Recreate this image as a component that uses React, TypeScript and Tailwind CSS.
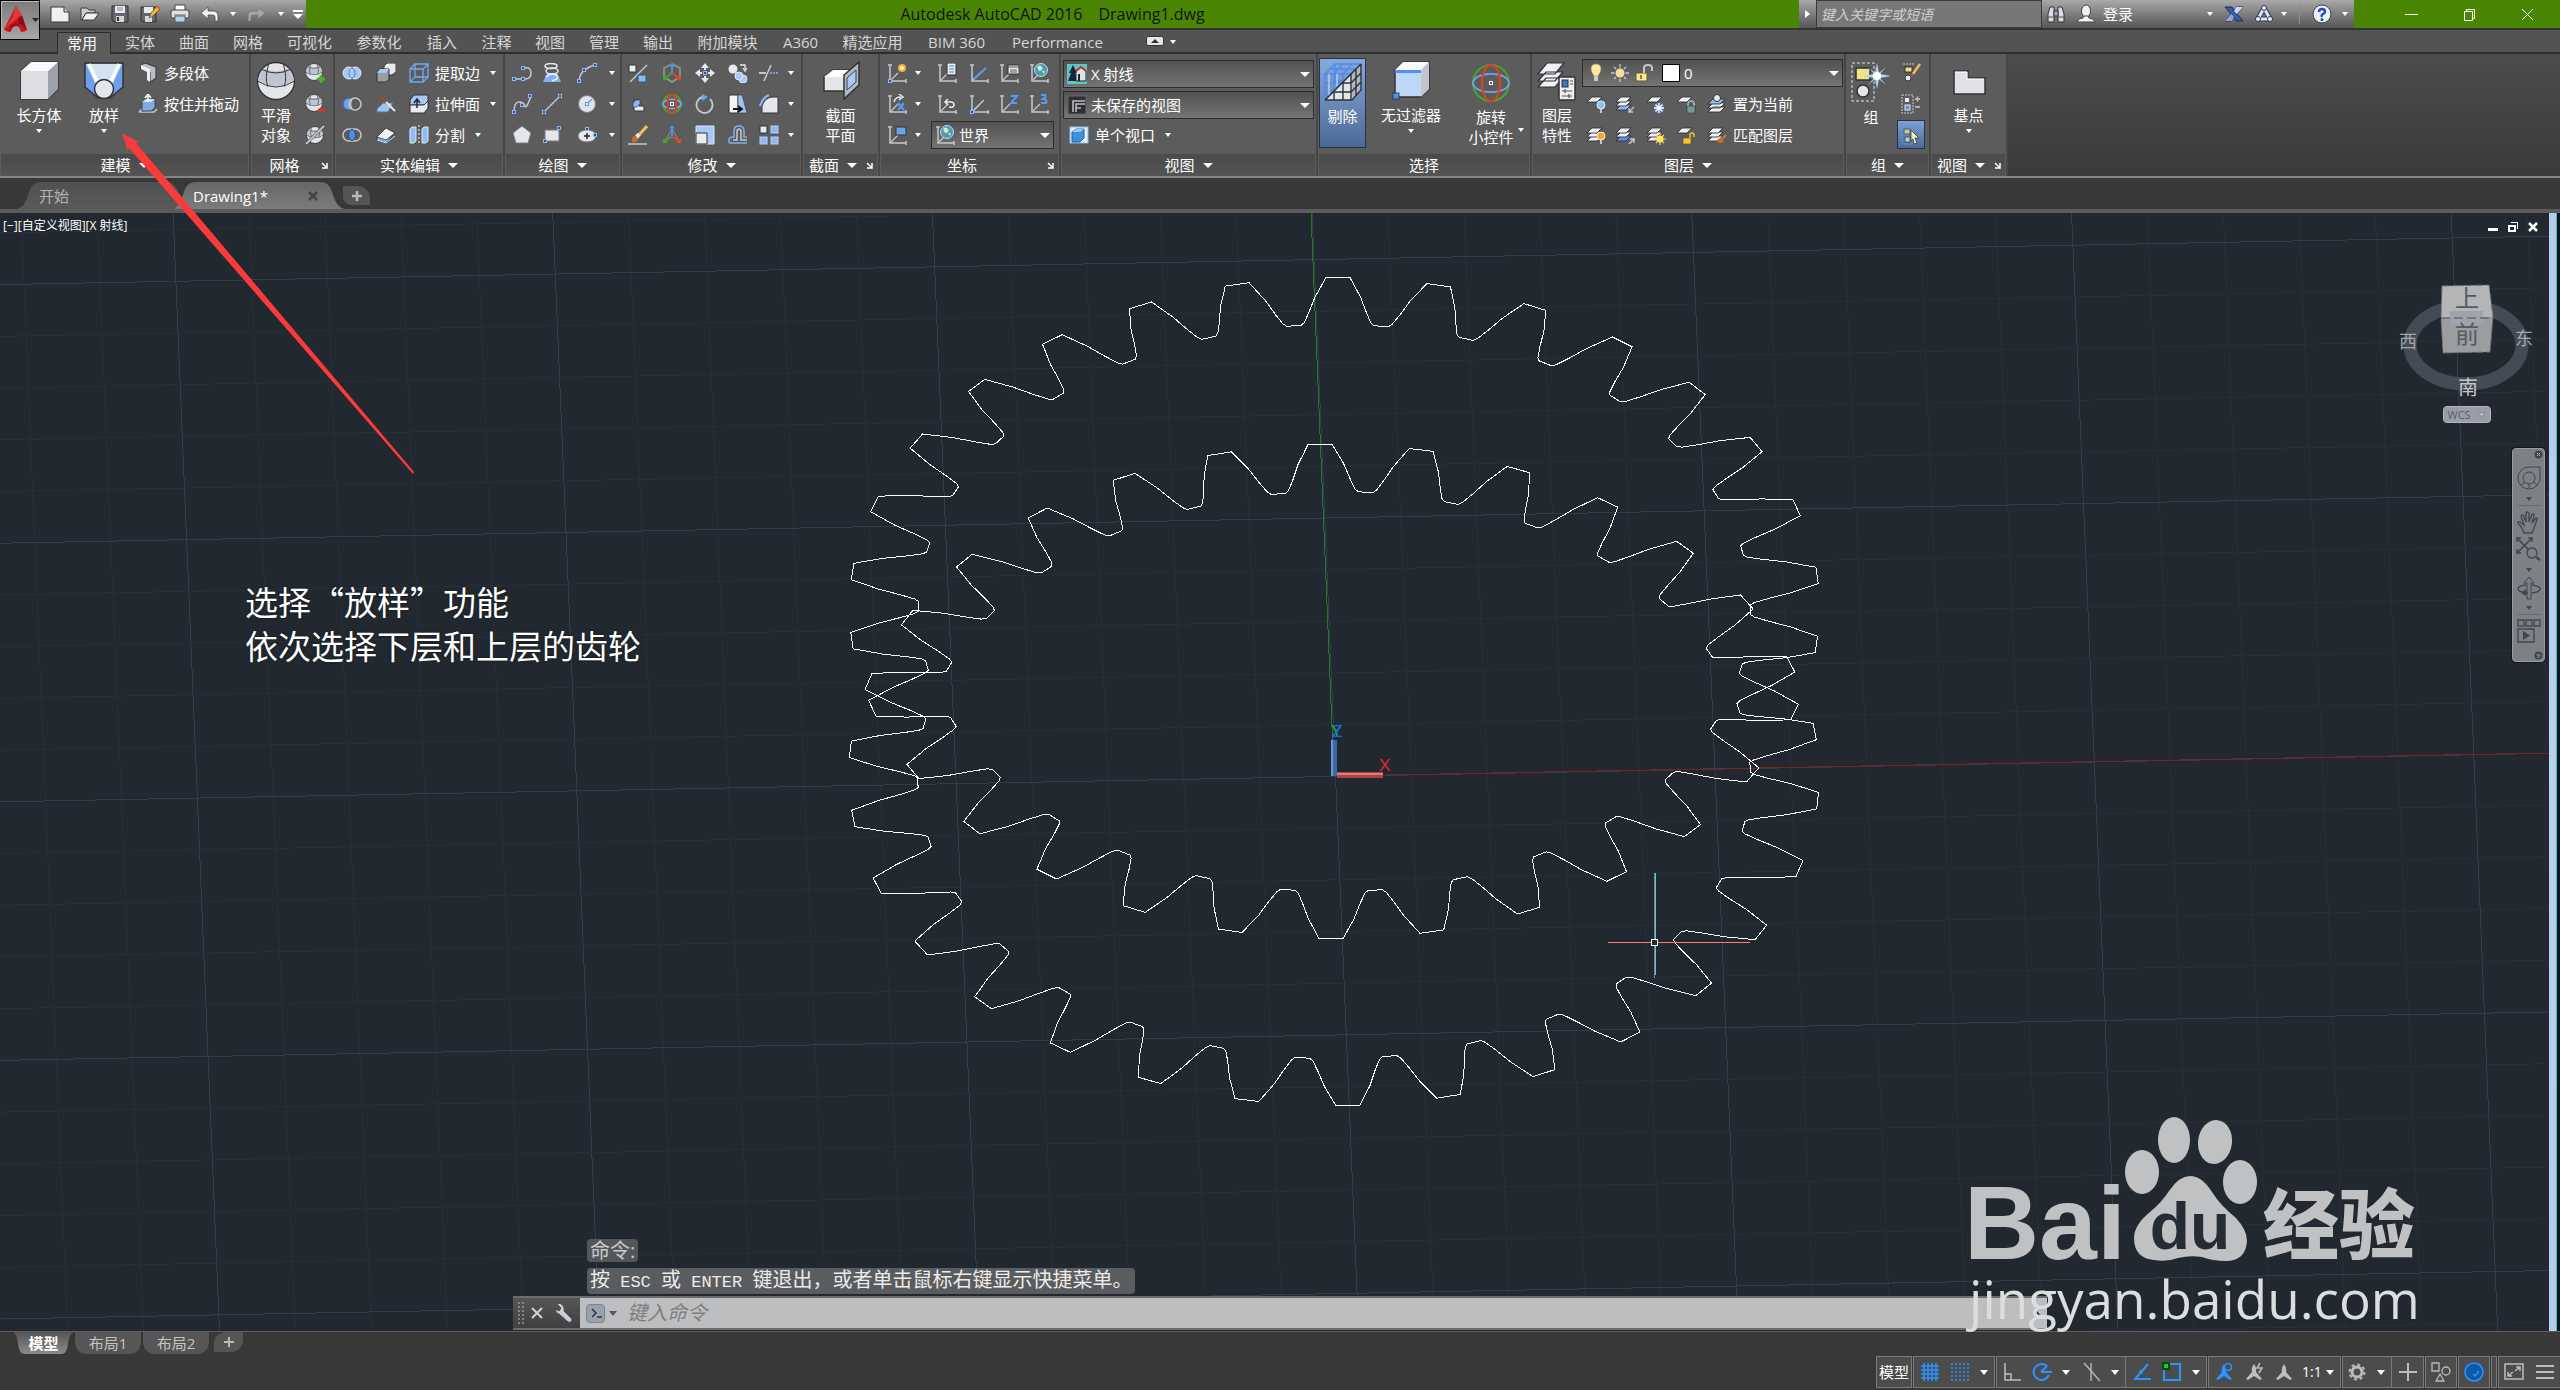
import React from "react";

type Kids = { children?: React.ReactNode };

/* ---------- generic icon helpers ---------- */

function Ic({ s = 20, children }: Kids & { s?: number }) {
  return (
    <svg width={s} height={s} viewBox={`0 0 ${s} ${s}`} fill="none" className="shrink-0" aria-hidden="true">
      {children}
    </svg>
  );
}

function Tri({ big = false }: { big?: boolean }) {
  return big ? (
    <svg width="10" height="5" viewBox="0 0 10 5" className="shrink-0" aria-hidden="true">
      <path d="M0 0H10L5 5Z" fill="#fff" />
    </svg>
  ) : (
    <svg width="6" height="4" viewBox="0 0 6 4" className="shrink-0" aria-hidden="true">
      <path d="M0 0H6L3 4Z" fill="#fff" />
    </svg>
  );
}

const W = "#e6e9ee";
const G = "#c4c8ce";
const D = "#2f3236";

/* ---------- quick access and title bar ---------- */

const NewIcon = () => (
  <Ic><path d="M1 3H14L19 8V18H1Z" fill="#eef0f2" stroke="#3a3a3a" /><path d="M14 3V8H19" fill="#c9ccd0" stroke="#3a3a3a" /></Ic>
);
const OpenIcon = () => (
  <Ic><path d="M1 4H7L9 6H15V9H6L2 16H1Z" fill="#c9ced4" stroke="#3a3a3a" /><path d="M6 9H19L14 16H2Z" fill="#eef0f3" stroke="#3a3a3a" /></Ic>
);
const SaveIcon = () => (
  <Ic><path d="M2 2H18V18H4L2 16Z" fill="#64686e" stroke="#2b2d30" /><rect x="5" y="2" width="10" height="7" fill="#e8eaec" /><rect x="6" y="12" width="8" height="6" fill="#d5d8db" /><rect x="7" y="13" width="2" height="4" fill="#333" /><path d="M7 4H13M7 6H13" stroke="#888" /></Ic>
);
const SaveAsIcon = () => (
  <Ic><path d="M1 3H16V18H3L1 16Z" fill="#64686e" stroke="#2b2d30" /><rect x="4" y="3" width="9" height="6" fill="#e8eaec" /><rect x="5" y="12" width="7" height="6" fill="#d5d8db" /><path d="M9 14L11 9L17 2L20 5L13 12Z" fill="#f0b340" stroke="#6b4a16" strokeWidth=".8" /><path d="M17 2L20 5" stroke="#c65f3d" strokeWidth="2" /></Ic>
);
const PrintIcon = () => (
  <Ic><path d="M5 1H15V7H5Z" fill="#fff" stroke="#444" /><rect x="1" y="6" width="18" height="8" rx="2" fill="#dfe2e6" stroke="#444" /><path d="M4 11H16" stroke="#666" /><path d="M5 12H15V18H5Z" fill="#b6d3ef" stroke="#55606c" /></Ic>
);
const UndoIcon = () => (
  <Ic><path d="M1 9L8 3V7H13Q18 7 18 12V17H15V13Q15 11 12 11H8V15Z" fill="#f2f2f2" stroke="#4a4a4a" strokeWidth=".8" /></Ic>
);
const RedoIcon = () => (
  <Ic><path d="M19 9L12 3V7H7Q2 7 2 12V17H5V13Q5 11 8 11H12V15Z" fill="#a6a6a6" stroke="#777" strokeWidth=".8" /></Ic>
);
const AppLogo = () => (
  <svg width="24" height="28" viewBox="0 0 24 28" aria-hidden="true">
    <path d="M12 0L23 24Q21 26 17 26L15 21Q12 19 9 21L6 26Q2 26 0 23Z" fill="#c8161d" />
    <path d="M12 0L8 12L0 23Q3 21 8 17L18 8Z" fill="#e5353a" />
    <path d="M18 9L23 24L13 15Z" fill="#8e0d12" />
    <path d="M6 18L16 17L15 21Q12 19 9 21L6 26Z" fill="#a31117" />
  </svg>
);
const Binoculars = () => (
  <Ic><path d="M4 3H8V18H2V10ZM12 3H16L18 10V18H12Z" fill="#d9dce0" stroke="#333" /><path d="M8 7H12V12H8Z" fill="#aab" stroke="#333" /><path d="M2 13H8M12 13H18" stroke="#555" /></Ic>
);
const UserIcon = () => (
  <Ic><ellipse cx="10" cy="7" rx="4.5" ry="6" fill="#f1f2f4" stroke="#444" /><path d="M1 18Q2 14 7 14L8 12H12L13 14Q18 14 19 18Z" fill="#f1f2f4" stroke="#444" /></Ic>
);
const ExchangeIcon = () => (
  <Ic><path d="M1 3H8L10 7L12 3H19L13 10L19 17H12L10 13L8 17H1L7 10Z" fill="#3b5ca8" stroke="#1c2a50" /><path d="M12 3H19L13 10L10 7Z" fill="#c9d6ee" /><path d="M1 17L7 10L10 13L8 17Z" fill="#8fa8dc" /></Ic>
);
const A360Icon = () => (
  <Ic><path d="M10 4L4 15H16Z" stroke="#2b3657" strokeWidth="5" strokeLinejoin="round" /><path d="M10 4L4 15H16Z" stroke="#dfe4ee" strokeWidth="3" strokeLinejoin="round" /><circle cx="10" cy="4" r="2.500" fill="#eef1f7" stroke="#2b3657" /><circle cx="4" cy="15" r="2.500" fill="#eef1f7" stroke="#2b3657" /><circle cx="16" cy="15" r="2.500" fill="#eef1f7" stroke="#2b3657" /></Ic>
);
const HelpIcon = () => (
  <Ic><circle cx="10" cy="10" r="9" fill="#eceef1" stroke="#444" /><path d="M7 8Q7 5 10 5T13 8Q13 9 11 10T10 13" stroke="#1d4fb4" strokeWidth="2.4" /><circle cx="10" cy="15.500" r="1.500" fill="#1d4fb4" /></Ic>
);

/* ---------- ribbon: modeling ---------- */

const BoxBig = () => (
  <Ic s={40}><path d="M2 10L12 1H39V28L29 38H2Z" fill="#e9eaec" stroke={D} strokeWidth="1.500" /><path d="M2 10H29V38H2Z" fill="#dcdee1" /><path d="M29 10L39 1V28L29 38Z" fill="#9da1ab" /><path d="M2 10L12 1H39L29 10Z" fill="#fafafa" /></Ic>
);
const LoftBig = () => (
  <Ic s={40}><path d="M1 2H39V26L26 37H14L1 26Z" fill="#6ea0e8" stroke={D} strokeWidth="1.500" /><path d="M2 3H38L29 22H11Z" fill="#d3e2f5" /><path d="M5 3L14 22M35 3L26 22" stroke="#fff" strokeWidth="3" /><circle cx="20" cy="28" r="9.500" fill="#e4e6e9" stroke={D} strokeWidth="1.500" /></Ic>
);
const Polysolid = () => (
  <Ic><path d="M3 2L7 0L18 4V15L12 19V9L3 6Z" fill="#b9bcc2" stroke={D} /><path d="M3 2L12 6V19L9 17V9L3 6Z" fill="#eceef0" /></Ic>
);
const PressPull = () => (
  <Ic><path d="M1 18L4 15M1 18H16L19 15" stroke={G} strokeWidth="1.500" /><path d="M4 8L8 5H17V14L13 17H4Z" fill="#7cabea" stroke={D} strokeWidth=".8" /><path d="M4 8L8 5H17L13 8Z" fill="#cfe1f7" /><path d="M10 8V2M7 4L10 0L13 4" stroke="#fff" strokeWidth="1.500" /></Ic>
);

/* ---------- ribbon: mesh ---------- */

function SphereShape({ c, r }: { c: number; r: number }) {
  const small = r < 12;
  return (
    <g>
      <circle cx={c} cy={c} r={r} fill="#e3e5e8" stroke={D} strokeWidth={small ? 0.8 : 1.3} />
      <path d={`M${c - r} ${c - r * 0.1}Q${c} ${c + r * 0.6} ${c + r} ${c - r * 0.1}L${c + r * 0.7} ${c - r * 0.7}Q${c} ${c - r * 0.35} ${c - r * 0.7} ${c - r * 0.7}Z`} fill="#aeb8c4" opacity=".7" />
      <path d={`M${c - r} ${c}Q${c} ${c + r * 0.65} ${c + r} ${c}M${c - r * 0.75} ${c - r * 0.62}Q${c} ${c - r * 0.25} ${c + r * 0.75} ${c - r * 0.62}M${c - r * 0.4} ${c - r * 0.9}Q${c - r * 0.62} ${c - r * 0.2} ${c - r * 0.45} ${c + r * 0.3}M${c + r * 0.4} ${c - r * 0.9}Q${c + r * 0.62} ${c - r * 0.2} ${c + r * 0.45} ${c + r * 0.3}`} stroke={small ? "#5a5f66" : D} strokeWidth={small ? 0.8 : 1} />
    </g>
  );
}
const SphereBig = () => <Ic s={40}><SphereShape c={20} r={18.5} /></Ic>;
const MeshMore = () => <Ic><SphereShape c={9} r={8.5} /><path d="M16 12V20M12 16H20" stroke="#4fae24" strokeWidth="3" /></Ic>;
const MeshLess = () => <Ic><SphereShape c={9} r={8.5} /><path d="M13 16H20" stroke="#e3341c" strokeWidth="3" /></Ic>;
const MeshRefine = () => <Ic><SphereShape c={10} r={8.5} /><path d="M1 19L19 1" stroke="#5c5c5c" strokeWidth="3" /><path d="M1 19L19 1" stroke="#d8dadd" strokeWidth="1.500" /></Ic>;

/* ---------- ribbon: solid editing ---------- */

const Union = () => <Ic><circle cx="7" cy="10" r="6" fill="#a9c8f3" stroke="#e3edfb" /><circle cx="13" cy="10" r="6" fill="#a9c8f3" stroke="#e3edfb" /><ellipse cx="10" cy="10" rx="3" ry="5" stroke="#4a79bd" /></Ic>;
const Subtract = () => <Ic><circle cx="7" cy="10" r="6" fill="#6ea0e4" stroke="#3565a9" /><circle cx="13" cy="10" r="6" fill="#5c5c5c" stroke={G} strokeWidth="1.500" /><path d="M10 5Q7 10 10 15" stroke={G} strokeWidth="1.500" /></Ic>;
const Intersect = () => <Ic><rect x="1" y="4" width="18" height="12" rx="6" stroke={G} strokeWidth="1.500" /><ellipse cx="10" cy="10" rx="3.500" ry="5.500" fill="#4f8be0" stroke="#2d4e82" /></Ic>;
const BoxPair = () => <Ic><path d="M8 3L11 0H20V9L16 12H8Z" fill="#e8eaed" stroke={D} /><path d="M1 10L4 6H13V16L10 19H1Z" fill="#9b9da1" stroke={D} /><path d="M1 10L4 6H13L10 10Z" fill="#a9c8f3" /></Ic>;
const SliceIcon = () => <Ic><path d="M1 15L7 9H17L12 18H1Z" fill="#9cc1f4" stroke="#54749f" /><path d="M3 1L12 10" stroke="#8a5420" strokeWidth="2.500" /><path d="M10 8L19 17" stroke="#e8eaed" strokeWidth="2" /></Ic>;
const ThickIcon = () => <Ic><path d="M1 12L10 3L19 8L10 18L1 15Z" fill="#8eb7f0" stroke={D} /><path d="M1 12L10 3L19 8L10 15Z" fill="#eff1f3" stroke={D} strokeWidth=".8" /><path d="M1 15L10 18L19 11" stroke="#cfe0f7" /></Ic>;
const ExtractEdges = () => <Ic><path d="M1 6H14V19H1ZM6 1H19V14H6ZM1 6L6 1M14 6L19 1M14 19L19 14M1 19L6 14" stroke="#74a7f3" strokeWidth="1.300" /></Ic>;
const ExtrudeFaces = () => <Ic><path d="M1 6L5 1H19V7L15 11H1Z" fill="#a8c8f4" stroke={D} /><path d="M1 11H15L19 7V14L15 19H1Z" fill="#e8eaed" stroke={D} /><path d="M8 14V6M5 9L8 5L11 9" stroke="#1b2a40" strokeWidth="1.500" /></Ic>;
const SeparateIcon = () => <Ic><path d="M1 4L3 2H7V16L5 18H1ZM13 4L15 2H19V16L17 18H13Z" fill="#93bbf3" stroke="#dfe9f8" strokeWidth="1" /><path d="M10 0V20" stroke="#fff" strokeDasharray="2 2" /></Ic>;

/* ---------- ribbon: draw ---------- */

const Node = ({ x, y }: { x: number; y: number }) => <rect x={x - 1.5} y={y - 1.5} width="3" height="3" fill="#32507e" stroke="#8bb8fa" />;
const PolylineIcon = () => <Ic><path d="M2 16H13Q19 16 19 10T13 5H11" stroke={G} strokeWidth="1.500" /><Node x={2} y={16} /><Node x={11} y={16} /><Node x={11} y={5} /></Ic>;
const HelixIcon = () => <Ic><path d="M5 10H15L19 19H1Z" fill="#7fb0f2" /><ellipse cx="9" cy="3" rx="6" ry="2.500" stroke={W} strokeWidth="1.500" /><ellipse cx="10" cy="8" rx="6" ry="3" stroke={W} strokeWidth="1.500" /><path d="M4 14Q9 9 14 12T10 18" stroke={W} strokeWidth="1.500" /></Ic>;
const ArcIcon = () => <Ic><path d="M2 18Q3 6 18 2" stroke={G} strokeWidth="1.500" /><Node x={2} y={18} /><Node x={18} y={2} /><Node x={7} y={7} /></Ic>;
const SplineIcon = () => <Ic><path d="M2 18Q2 8 7 8T13 12T19 2" stroke={G} strokeWidth="1.500" /><Node x={2} y={18} /><Node x={10} y={11} /><Node x={18} y={2} /></Ic>;
const LineIcon = () => <Ic><path d="M2 18L18 2" stroke={G} strokeWidth="1.500" /><Node x={2} y={18} /><Node x={18} y={2} /></Ic>;
const CircleIcon = () => <Ic><circle cx="10" cy="10" r="8.500" fill="#e1e4e9" stroke="#777d87" /><path d="M10 10L15 5" stroke="#5a96ec" strokeWidth="1.500" /><rect x="8.500" y="8.500" width="3" height="3" fill="#dceafc" stroke="#5a96ec" /></Ic>;
const PolygonIcon = () => <Ic><path d="M10 1L19 8L16 18H4L1 8Z" fill="#e4e6ea" stroke="#777d87" /></Ic>;
const RectIcon = () => <Ic><rect x="3" y="5" width="14" height="11" fill="#e4e6ea" stroke="#777d87" /><Node x={3} y={16} /><Node x={17} y={3} /></Ic>;
const EllipseIcon = () => <Ic><ellipse cx="10" cy="11" rx="9" ry="6" fill="#e4e6ea" stroke="#777d87" /><path d="M10 8V14M7 11H13" stroke="#222" strokeWidth="1.500" /><Node x={10} y={4} /><Node x={18} y={10} /></Ic>;

/* ---------- ribbon: modify ---------- */

const AlignIcon = () => <Ic><path d="M1 2H8V9H1Z" fill="#eceef1" stroke={D} /><path d="M2 19L19 2" stroke={G} strokeWidth="1.500" /><path d="M10 12H18V19H10Z" fill="#8bb7f5" stroke="#35557f" /></Ic>;
const Gizmo3DMove = () => <Ic><path d="M10 1L18 5V14L10 19L2 14V5Z" stroke="#98999b" strokeWidth="1.500" /><path d="M10 10V3" stroke="#4d8af0" strokeWidth="2" /><path d="M10 10L3 15" stroke="#47a52e" strokeWidth="2" /><path d="M10 10L17 15" stroke="#de4a2b" strokeWidth="2" /><rect x="1" y="13" width="4" height="4" fill="#47a52e" /><rect x="15" y="13" width="4" height="4" fill="#de4a2b" /><rect x="8" y="1" width="4" height="3" fill="#4d8af0" /></Ic>;
const MoveIcon = () => <Ic><path d="M10 0L14 5H11V7H9V5H6ZM10 20L14 15H11V13H9V15H6ZM0 10L5 6V9H7V11H5V14ZM20 10L15 6V9H13V11H15V14Z" fill={W} /><Node x={10} y={10} /></Ic>;
const CopyIcon = () => <Ic><circle cx="5" cy="6" r="4.500" fill={W} /><circle cx="15" cy="16" r="4" fill="#a8caf8" stroke="#dceafb" /><circle cx="11" cy="13" r="4" fill="#a8caf8" stroke="#dceafb" /><path d="M12 2H17V6M15 5L17 8L19 5" stroke={W} strokeWidth="1.300" /></Ic>;
const TrimIcon = () => <Ic><path d="M0 10H7" stroke={W} strokeWidth="1.500" /><path d="M5 18L12 2" stroke={G} strokeWidth="1.500" /><path d="M11 10H20" stroke="#7fb0f2" strokeWidth="1.500" strokeDasharray="2 1" /></Ic>;
const EraseSolid = () => <Ic><path d="M6 6H11V12H16V17H6Z" fill={W} stroke={D} /><path d="M5 9L8 6H12V10L9 13H5Z" fill="#8bb7f5" stroke={D} strokeWidth=".6" /></Ic>;
const GizmoRotate = ({ s = 20 }: { s?: number }) => (
  <Ic s={s}>
    <circle cx={s / 2} cy={s / 2} r={s * 0.45} stroke="#47a52e" strokeWidth="2" />
    <ellipse cx={s / 2} cy={s / 2} rx={s * 0.45} ry={s * 0.23} stroke="#6ea4f2" strokeWidth="1.800" />
    <ellipse cx={s / 2} cy={s / 2} rx={s * 0.23} ry={s * 0.45} stroke="#e0401f" strokeWidth="2" />
    <rect x={s / 2 - 1.5} y={s / 2 - 1.5} width="3" height="3" fill="#555" stroke="#fff" />
  </Ic>
);
const RotateIcon = () => <Ic><path d="M8 3A8 8 0 1 0 15 5" stroke={G} strokeWidth="1.800" /><path d="M7 0L13 3L7 7Z" fill="#6ea4f2" /></Ic>;
const TaperIcon = () => <Ic><path d="M1 1H10V19H1Z" fill="#f2f3f5" stroke={D} /><path d="M10 1H14L19 19H10Z" fill="#9cc2f6" stroke={D} strokeWidth=".6" /><path d="M5 15H13M10 12L14 15L10 18" stroke="#111" strokeWidth="1.800" /></Ic>;
const FilletIcon = () => <Ic><path d="M3 19V12Q6 3 14 3H19V19Z" fill="#e4e6ea" stroke={D} /><path d="M1 12Q4 3 10 1" stroke="#7fb0f2" strokeWidth="2.500" /></Ic>;
const BrushIcon = () => <Ic><path d="M19 1L10 11" stroke="#f0bd58" strokeWidth="3" /><path d="M11 9L8 13" stroke={W} strokeWidth="4" /><path d="M4 17Q3 11 8 11L10 14Q9 18 4 17Z" fill="#d9632a" /><path d="M0 19H19" stroke={G} strokeWidth="1.500" /></Ic>;
const GizmoScale = () => <Ic><path d="M10 4L3 16L10 12L17 16Z" stroke="#8d9095" strokeWidth="1" /><path d="M10 11V3" stroke="#4d8af0" strokeWidth="2" /><path d="M9 12L2 17" stroke="#47a52e" strokeWidth="2" /><path d="M11 12L18 17" stroke="#de4a2b" strokeWidth="2" /><rect x="8" y="1" width="4" height="3" fill="#4d8af0" /><rect x="1" y="14" width="4" height="4" fill="#47a52e" /><rect x="15" y="14" width="4" height="4" fill="#de4a2b" /></Ic>;
const ScaleIcon = () => <Ic><path d="M1 1H19V19H1Z" fill="#a8c9f6" stroke="#dce6f5" /><path d="M1 8H12V19H1Z" fill="#e9ebee" stroke={D} /></Ic>;
const OffsetIcon = () => <Ic><path d="M1 18V15Q1 12 5 12H6V6Q6 1 11 1T16 6V12H19" stroke="#7fb0f2" strokeWidth="1.500" /><path d="M1 18H19" stroke="#7fb0f2" strokeWidth="1.500" /><path d="M5 15H9V7Q9 4 11 4T13 7V15H19" stroke={G} strokeWidth="1.500" /></Ic>;
const ArrayIcon = () => <Ic><rect x="1" y="1" width="7" height="7" fill={W} stroke={D} /><rect x="12" y="1" width="7" height="7" fill="#8bb7f5" stroke="#b7d2f8" /><rect x="1" y="12" width="7" height="7" fill="#8bb7f5" stroke="#b7d2f8" /><rect x="12" y="12" width="7" height="7" fill="#8bb7f5" stroke="#b7d2f8" /></Ic>;

const SectionBig = () => <Ic s={40}><path d="M3 16L12 9H31L26 30H3Z" fill="#e3e5e8" stroke={D} strokeWidth="1.500" /><path d="M3 16L12 9H31L24 16Z" fill="#fff" /><path d="M23 14L38 1V24L23 38Z" fill="#b4b7bc" stroke={D} strokeWidth="1.500" /><path d="M26 17L35 9V21L26 29Z" fill="#a8caf8" stroke="#33445c" /></Ic>;

/* ---------- ribbon: coordinates ---------- */

function Axes({ children }: Kids) {
  return (
    <Ic>
      <path d="M3 2V18H19" stroke={G} strokeWidth="1.500" />
      <path d="M4 17L11 10" stroke={G} strokeWidth="1.200" />
      <path d="M1 2H5M19 16V20" stroke={G} strokeWidth="1.500" />
      {children}
    </Ic>
  );
}
const UcsNew = () => <Axes><circle cx="15" cy="5" r="4" fill="#f7b13b" /><circle cx="15" cy="5" r="2" fill="#fff4c9" /><Node x={3} y={18} /></Axes>;
const UcsX = () => <Axes><path d="M7 8Q8 3 14 3M12 0L16 3L12 6" stroke={W} strokeWidth="1.500" /><path d="M11 9L17 16M17 9L11 16" stroke="#5a9af5" strokeWidth="2" /></Axes>;
const UcsView = () => <Axes><rect x="9" y="2" width="10" height="8" fill="#6ba2ef" stroke={D} /></Axes>;
const UcsPanel = () => <Axes><rect x="10" y="0" width="9" height="12" fill="#e9ebee" stroke={D} /><path d="M12 3H17M12 6H17M12 9H17" stroke="#4f83cc" /></Axes>;
const UcsZAxis = () => <Axes><path d="M5 16L17 5" stroke="#5a9af5" strokeWidth="1.800" /></Axes>;
const UcsNamed = () => <Axes><rect x="9" y="2" width="11" height="9" fill="#e9ebee" stroke={D} /><path d="M9 4H20M11 7H18M11 9H18" stroke="#555" /></Axes>;
const Globe = ({ x = 12, y = 7 }: { x?: number; y?: number }) => <g><circle cx={x} cy={y} r="6.500" fill="#4f9bb0" stroke="#bcdde6" /><path d={`M${x - 4} ${y - 3}Q${x - 1} ${y - 6} ${x + 1} ${y - 3}T${x - 2} ${y + 1}ZM${x + 1} ${y + 1}Q${x + 5} ${y} ${x + 3} ${y + 4}Z`} fill="#d3ead0" /></g>;
const UcsWorld = () => <Axes><Globe /></Axes>;
const UcsPrev = () => <Axes><path d="M8 8H14Q17 8 17 11T12 13M11 5L8 8L11 11" stroke={W} strokeWidth="1.500" /></Axes>;
const UcsOrigin = () => <Axes><path d="M5 16L15 6" stroke={G} strokeWidth="1.200" /><Node x={3} y={18} /></Axes>;
const UcsZ = () => <Axes><path d="M12 2H18L12 9H18" stroke="#5a9af5" strokeWidth="2" /></Axes>;
const Ucs3 = () => <Axes><path d="M12 1H16Q18 3 14 5Q19 6 17 9H12" stroke="#5a9af5" strokeWidth="2" /></Axes>;

/* ---------- ribbon: view and selection ---------- */

const XrayIcon = () => <Ic><rect width="20" height="20" fill="#5fc6c2" /><path d="M6 1L10 9H8L11 17H1L4 9H2Z" fill="#14253f" /><path d="M9 7L14 3L19 7V17H9Z" fill="#dfe3e7" stroke="#222" /><path d="M9 7L14 3L19 7" stroke="#b92d28" strokeWidth="2" /><path d="M12 10V17" stroke="#222" strokeWidth="2" /></Ic>;
const ViewIcon = () => <Ic><rect x="1" y="1" width="18" height="18" fill="#2e2f31" stroke="#686a6d" /><path d="M6 17V6H18M9 17V9H18M9 13H14" stroke="#b9bcc0" strokeWidth="1.600" /></Ic>;
const ViewportIcon = () => <Ic><rect x="1" y="2" width="18" height="16" fill="#e9f1fb" stroke="#8fb7e8" /><path d="M3 7L7 4H15V13L11 17H3Z" fill="#3f8fe0" stroke="#1f5fa8" /><path d="M3 7L7 4H15L11 7Z" fill="#9ccaf7" /></Ic>;
const CullBig = () => (
  <Ic s={40}>
    <path d="M2 38L28 12L38 2V28L29 38Z" fill="#e3e5e8" />
    <path d="M28 12L38 2V28L29 38Z" fill="#b4b8c0" />
    <path d="M2 12H28L2 38ZM12 2H38L28 12H2ZM11 12V29M20 12V20M2 21H19M2 30H10M12 2V20M20 2L11 12M29 2L20 12M12 19H21M7 7H33" stroke="#4c8bf0" strokeWidth="1.400" />
    <path d="M14 12V24M6 12V34" stroke="#dce9fb" strokeWidth="1" />
    <path d="M2 38H29L38 28V2M11 29V38M20 21V38M28 12V38M11 30H28L38 20M20 21H28L38 11M33 7V33M2 38L38 2" stroke={D} strokeWidth="1.400" />
  </Ic>
);
const FilterBig = () => <Ic s={40}><path d="M4 9L12 1H38V28L30 36H4Z" fill="#bdd8f6" stroke={D} strokeWidth="1.500" /><path d="M4 9L12 1H38L30 9Z" fill="#fafafa" /><path d="M30 9L38 1V28L30 36Z" fill="#c2c5cb" /><path d="M4 9H30V12H4Z" fill="#4f90f2" /><rect x="2" y="32" width="6" height="6" fill="#4f90f2" stroke={D} strokeWidth=".8" /></Ic>;

/* ---------- ribbon: layers ---------- */

function Sheets({ tint = "#f1f2f4", n = 3 }: { tint?: string; n?: number }) {
  return (
    <g stroke={D} strokeWidth=".9">
      {n > 2 && <path d="M1 16L6 11H16L11 16Z" fill={tint} />}
      {n > 1 && <path d="M1 12L6 7H16L11 12Z" fill="#f1f2f4" />}
      <path d="M1 8L6 3H16L11 8Z" fill="#f1f2f4" />
    </g>
  );
}
const LayerPropsBig = () => (
  <Ic s={40}><g stroke={D} strokeWidth="1.200" fill="#f1f2f4"><path d="M1 26L9 17H26L18 26ZM1 20L9 11H26L18 20ZM1 13L10 2H27L18 13Z" /></g><rect x="22" y="16" width="16" height="23" rx="1" fill="#eceef1" stroke={D} strokeWidth="1.500" /><rect x="25" y="19" width="6" height="7" fill="#3f74c0" stroke="#234" /><path d="M33 20H36M33 23H36M25 30H35M25 35H35M28 28V32M32 33V37" stroke="#555" strokeWidth="1.200" /></Ic>
);
const LayerOff = () => <Ic><Sheets n={1} /><circle cx="15" cy="11" r="4" fill="#8fc1f7" stroke="#e1effd" /><path d="M15 15V19" stroke={G} strokeWidth="2" /></Ic>;
const LayerIso = () => <Ic><Sheets tint="#8fbdf4" /><path d="M19 13L14 18M14 14V18H18" stroke={G} strokeWidth="1.300" /></Ic>;
const LayerFreeze = () => <Ic><Sheets n={1} /><circle cx="13" cy="14" r="5.500" fill="#4776b6" /><path d="M13 9V19M8 14H18M9.500 10.500L16.500 17.500M16.500 10.500L9.500 17.500" stroke="#fff" strokeWidth="1.300" /></Ic>;
const LayerLock = () => <Ic><Sheets n={1} /><rect x="11" y="12" width="8" height="7" fill="#6f9c9a" stroke={D} strokeWidth=".6" /><path d="M12 12V10Q12 7 15 7T18 10V12" stroke="#9dbab8" strokeWidth="1.500" /></Ic>;
const LayerCurrent = () => <Ic><g stroke={D} strokeWidth=".9"><path d="M1 18L6 13H18L13 18ZM1 14L6 9H18L13 14Z" fill="#f1f2f4" /><path d="M1 10L6 5H18L13 10Z" fill="#8fbdf4" /></g><circle cx="10" cy="4" r="3.500" fill={W} stroke={D} /></Ic>;
const LayerOn = () => <Ic><Sheets /><circle cx="15" cy="11" r="4" fill="#f4a63a" stroke="#fff1cd" /><path d="M15 15V19" stroke={G} strokeWidth="2" /></Ic>;
const LayerUniso = () => <Ic><Sheets tint="#5a94ea" /><path d="M14 19L19 14M15 14H19V18" stroke={G} strokeWidth="1.500" /></Ic>;
const LayerThaw = () => <Ic><Sheets /><path d="M14 8V20M8 14H20M10 10L18 18M18 10L10 18" stroke="#f7d24a" strokeWidth="1.200" /><circle cx="14" cy="14" r="3.500" fill="#ffe45c" /></Ic>;
const LayerUnlock = () => <Ic><Sheets n={1} /><rect x="7" y="13" width="8" height="6" fill="#f3c33c" stroke="#5b4510" strokeWidth=".6" /><path d="M14 13V10Q14 8 16 8T18 10V12" stroke="#f3c33c" strokeWidth="1.500" /></Ic>;
const LayerMatch = () => <Ic><Sheets /><path d="M9 16L14 12L17 16Q14 20 9 16Z" fill="#d9632a" /><path d="M15 14L19 10" stroke="#b98045" strokeWidth="2" /></Ic>;
const BulbIcon = () => <Ic><path d="M10 1Q15 1 15 6Q15 9 12 13H8Q5 9 5 6Q5 1 10 1Z" fill="#fde9a4" stroke="#b08d3c" strokeWidth=".6" /><rect x="8" y="13" width="4" height="5" fill="#c9ccd0" /></Ic>;
const SunIcon = () => <Ic><path d="M10 1V19M1 10H19M4 4L16 16M16 4L4 16" stroke={G} strokeWidth="1.300" /><circle cx="10" cy="10" r="5.500" fill="#5d5d5d" /><circle cx="10" cy="10" r="4.500" fill="#fbdc9c" /></Ic>;
const OpenLock = () => <Ic><rect x="2" y="10" width="11" height="8" fill="#fae59c" stroke="#6d5a22" /><path d="M10 10V5Q10 2 14 2T18 5V8" stroke={G} strokeWidth="2" /><path d="M7 12V16" stroke="#6d5a22" strokeWidth="1.500" /></Ic>;

/* ---------- ribbon: groups and base view ---------- */

const Burst = ({ x, y }: { x: number; y: number }) => (
  <g transform={`translate(${x} ${y})`}><path d="M0 -13L2 -3L9 -9L3 -2L14 0L3 2L9 9L2 3L0 13L-2 3L-9 9L-3 2L-14 0L-3 -2L-9 -9L-2 -3Z" fill="#a9d4fa" /><circle r="4" fill="#fff" /></g>
);
const GroupBig = () => <Ic s={42}><rect x="2" y="2" width="22" height="38" stroke="#dfe1e4" strokeDasharray="3 2" /><rect x="6" y="7" width="14" height="12" fill="#efe389" stroke={D} strokeWidth="1.500" /><circle cx="13" cy="30" r="6" fill="#e4e6ea" stroke={D} strokeWidth="1.500" /><Burst x={27} y={15} /></Ic>;
const GroupEdit = () => <Ic><path d="M2 1H13" stroke={G} strokeDasharray="2 1" /><rect x="4" y="4" width="7" height="5" fill="#efe389" stroke={D} /><circle cx="7" cy="15" r="3" fill={W} stroke={D} /><path d="M19 1L12 11" stroke="#f0bd58" strokeWidth="2.500" /><path d="M12 11L10 14" stroke="#d3423a" strokeWidth="2" /></Ic>;
const GroupAdd = () => <Ic><rect x="1" y="1" width="11" height="18" stroke={G} strokeDasharray="2 1" /><rect x="4" y="4" width="4" height="4" fill={W} /><rect x="4" y="11" width="5" height="5" fill="#5d93e0" stroke="#dceafb" /><path d="M14 5H19M16.500 2.500V7.500M14 13H19" stroke={G} strokeWidth="1.300" /></Ic>;
const GroupSelect = () => <Ic><rect x="1" y="1" width="11" height="18" stroke="#5f9cf6" strokeDasharray="2 1" /><rect x="3" y="4" width="6" height="5" fill="#cdc891" stroke="#4a5a6a" /><rect x="4" y="12" width="5" height="5" fill="#c3cad4" stroke="#4a5a6a" /><path d="M10 5L18 13H14L16 18L13 19L12 14L10 16Z" fill="#f0ecb4" stroke="#2f3a50" strokeWidth=".8" /></Ic>;
const BaseBig = () => <Ic s={40}><path d="M5 10H19V17H36V33H5Z" fill="#dfe1e5" stroke={D} strokeWidth="1.500" /><path d="M6 11H18V18H35" stroke="#fff" /></Ic>;

/* ---------- ribbon building blocks ---------- */

function Panel({ title, w, more, launcher, children }: Kids & { title: string; w: string; more?: boolean; launcher?: boolean }) {
  return (
    <section aria-label={title} className={`flex shrink-0 flex-col border-r-2 border-[#474747] bg-[#5c5c5c] ${w}`}>
      <div className="flex h-[100px] pt-[3px]">{children}</div>
      <footer className="mx-px flex h-[22px] items-center justify-center bg-gradient-to-b from-[#4a4a4a] to-[#545454]">
        <button className="flex flex-1 items-center justify-center gap-2">
          {title}
          {more && <Tri big />}
        </button>
        {launcher && (
          <button aria-label={`${title} 设置`} className="px-1">
            <svg width="7" height="7" viewBox="0 0 7 7" fill="none" stroke="#fff" strokeWidth="1.500">
              <path d="M1 1L6 6M6 1V6H1" />
            </svg>
          </button>
        )}
      </footer>
    </section>
  );
}

function Big({ icon, lines, w, arrow, active }: { icon: React.ReactNode; lines: string[]; w: string; arrow?: boolean; active?: boolean }) {
  return (
    <button
      className={`flex shrink-0 flex-col items-center border pt-[3px] leading-5 ${w} ${
        active ? "mt-px h-[90px] border-[#27324c] bg-gradient-to-b from-[#86a9dc] to-[#4d6a94]" : "h-[94px] border-transparent"
      }`}
    >
      {icon}
      <span className="mt-1 flex flex-col items-center">
        {lines.map((l) => (
          <span key={l}>{l}</span>
        ))}
      </span>
      {arrow && (
        <span className="mt-1">
          <Tri />
        </span>
      )}
    </button>
  );
}

function Tool({ name, children, active }: Kids & { name: string; active?: boolean }) {
  return (
    <button
      aria-label={name}
      className={`flex items-center justify-center ${active ? "mx-px my-[1px] border border-[#27324c] bg-gradient-to-b from-[#7ea0d4] to-[#4d6a94]" : ""}`}
    >
      {children}
    </button>
  );
}

function Drop({ name }: { name: string }) {
  return (
    <button aria-label={name} className="flex items-center justify-center">
      <Tri />
    </button>
  );
}

function Labeled({ icon, text, arrow }: { icon: React.ReactNode; text: string; arrow?: boolean }) {
  return (
    <button className="flex items-center gap-[6px] whitespace-nowrap px-[6px]">
      {icon}
      <span>{text}</span>
      {arrow && (
        <span className="ml-1">
          <Tri />
        </span>
      )}
    </button>
  );
}

function Combo({ label, value, icon, className = "" }: { label: string; value: string; icon: React.ReactNode; className?: string }) {
  return (
    <label className={`flex h-7 items-center gap-1 border border-[#2c2c2c] bg-gradient-to-b from-[#525252] to-[#747474] px-[3px] ${className}`}>
      {icon}
      <select aria-label={label} className="min-w-0 flex-1 appearance-none bg-transparent text-white outline-none">
        <option>{value}</option>
      </select>
      <Tri big />
    </label>
  );
}

/* ---------- header ---------- */

const ribbonTabs: [string, string][] = [
  ["实体", "w-[54px]"], ["曲面", "w-[54px]"], ["网格", "w-[54px]"], ["可视化", "w-[69px]"], ["参数化", "w-[70px]"],
  ["插入", "w-[56px]"], ["注释", "w-[53px]"], ["视图", "w-[54px]"], ["管理", "w-[54px]"], ["输出", "w-[54px]"],
  ["附加模块", "w-[85px]"], ["A360", "w-[61px]"], ["精选应用", "w-[83px]"], ["BIM 360", "w-[85px]"], ["Performance", "w-[117px]"],
];

function Header() {
  return (
    <header className="relative h-[54px] border-b-2 border-[#2e2e2e] bg-[#535353]">
      <div className="flex h-[30px] items-stretch border-b-2 border-[#333] bg-[#4b8504]">
        <div className="flex w-[306px] items-center bg-gradient-to-b from-[#a9a9a9] to-[#565656] pl-[50px]">
          {[<NewIcon />, <OpenIcon />, <SaveIcon />, <SaveAsIcon />, <PrintIcon />, <UndoIcon />].map((ic, i) => (
            <button key={i} aria-label={["新建", "打开", "保存", "另存为", "打印", "放弃"][i]} className="mr-[10px]">
              {ic}
            </button>
          ))}
          <button aria-label="放弃列表"><Tri /></button>
          <button aria-label="重做" className="ml-[10px] mr-3"><RedoIcon /></button>
          <button aria-label="重做列表"><Tri /></button>
          <button aria-label="自定义快速访问工具栏" className="ml-[9px] flex flex-col items-center gap-[2px]">
            <span className="h-[2px] w-[10px] bg-white" />
            <Tri big />
          </button>
        </div>
        <h1 className="flex flex-1 items-center justify-center gap-4 whitespace-pre text-base text-[#141414]">
          <span>Autodesk AutoCAD 2016</span>
          <span>Drawing1.dwg</span>
        </h1>
        <div className="flex w-[555px] items-center bg-gradient-to-b from-[#a9a9a9] to-[#565656]">
          <button aria-label="展开搜索" className="flex w-[17px] justify-center">
            <svg width="5" height="8" viewBox="0 0 5 8"><path d="M0 0L5 4L0 8Z" fill="#fff" /></svg>
          </button>
          <input
            aria-label="搜索"
            placeholder="键入关键字或短语"
            className="h-7 w-[226px] border border-[#3a3a3a] bg-[#777] px-1 text-sm italic text-white outline-none placeholder:text-[#cfcfcf]"
          />
          <button aria-label="搜索" className="ml-1"><Binoculars /></button>
          <button className="ml-[10px] flex items-center gap-[7px] text-white"><UserIcon />登录</button>
          <button aria-label="登录菜单" className="ml-auto mr-[11px]"><Tri /></button>
          <button aria-label="Exchange" className="mr-[10px]"><ExchangeIcon /></button>
          <button aria-label="A360" className="mr-[7px]"><A360Icon /></button>
          <button aria-label="A360 菜单"><Tri /></button>
          <span className="mx-3 h-5 w-px bg-[#8d8d8d]" />
          <button aria-label="帮助"><HelpIcon /></button>
          <button aria-label="帮助菜单" className="ml-[10px] mr-[6px]"><Tri /></button>
        </div>
        <div className="flex w-[206px] items-center justify-around pl-7 pr-1">
          <button aria-label="最小化"><Ic s={13}><path d="M0 6.500H13" stroke="#fff" /></Ic></button>
          <button aria-label="还原"><Ic s={13}><path d="M1.500 3.500H9.500V12.500H1.500ZM3.500 3.500V1.500H11.500V10.500H9.500" stroke="#fff" /></Ic></button>
          <button aria-label="关闭"><Ic s={13}><path d="M1 1L12 12M12 1L1 12" stroke="#fff" /></Ic></button>
        </div>
      </div>
      <nav className="flex h-[24px] items-end pl-[57px] text-[#d6d6d6]">
        <button className="mr-[2px] flex h-[22px] w-[54px] items-center justify-center border border-b-0 border-[#2b2b2b] bg-[#5c5c5c] pb-[2px] pr-1 text-white">常用</button>
        {ribbonTabs.map(([t, w]) => (
          <button key={t} className={`flex h-[22px] items-center justify-center pb-[2px] ${w}`}>{t}</button>
        ))}
        <button aria-label="最小化功能区" className="mb-2 ml-[30px]">
          <svg width="18" height="10" viewBox="0 0 18 10"><rect x=".5" y=".5" width="17" height="9" rx="2" fill="#e4e6ea" stroke="#333" /><path d="M5 7H13L9 3Z" fill="#333" /></svg>
        </button>
        <button aria-label="功能区选项" className="mb-[10px] ml-[6px] flex"><Tri /></button>
      </nav>
      <button aria-label="应用程序菜单" className="absolute left-0 top-0 flex h-10 w-10 items-center gap-1 border border-black bg-gradient-to-b from-[#7b7b7b] to-[#a8a8a8] pl-[3px] shadow-[inset_1px_1px_0_#bbb]">
        <AppLogo />
        <svg width="7" height="4" viewBox="0 0 7 4"><path d="M0 0H7L3.500 4Z" fill="#1e2733" /></svg>
      </button>
    </header>
  );
}

const rows = "grid auto-rows-[31px]";

function Ribbon() {
  return (
    <div className="flex h-[124px] border-b-2 border-[#858585] bg-gradient-to-b from-[#4c4c4c] to-[#3a3a3a] text-white">
      <Panel title="建模" w="w-[251px]" more>
        <div className="flex pl-[6px]">
          <Big icon={<BoxBig />} lines={["长方体"]} w="w-[66px]" arrow />
          <Big icon={<LoftBig />} lines={["放样"]} w="w-[64px]" arrow />
        </div>
        <div className={`${rows} -ml-1`}>
          <Labeled icon={<Polysolid />} text="多段体" />
          <Labeled icon={<PressPull />} text="按住并拖动" />
        </div>
      </Panel>
      <Panel title="网格" w="w-[84px]" launcher>
        <Big icon={<SphereBig />} lines={["平滑", "对象"]} w="w-[50px]" />
        <div className={`${rows} grid-cols-[28px]`}>
          <Tool name="提高平滑度"><MeshMore /></Tool>
          <Tool name="降低平滑度"><MeshLess /></Tool>
          <Tool name="优化网格"><MeshRefine /></Tool>
        </div>
      </Panel>
      <Panel title="实体编辑" w="w-[170px]" more>
        <div className={`${rows} grid-cols-[34px_34px_100px]`}>
          <Tool name="并集"><Union /></Tool><Tool name="干涉"><BoxPair /></Tool><Labeled icon={<ExtractEdges />} text="提取边" arrow />
          <Tool name="差集"><Subtract /></Tool><Tool name="剖切"><SliceIcon /></Tool><Labeled icon={<ExtrudeFaces />} text="拉伸面" arrow />
          <Tool name="交集"><Intersect /></Tool><Tool name="加厚"><ThickIcon /></Tool><Labeled icon={<SeparateIcon />} text="分割" arrow />
        </div>
      </Panel>
      <Panel title="绘图" w="w-[117px]" more>
        <div className={`${rows} grid-cols-[30px_30px_40px_9px] pl-[2px]`}>
          <Tool name="多段线"><PolylineIcon /></Tool><Tool name="螺旋"><HelixIcon /></Tool><Tool name="圆弧"><ArcIcon /></Tool><Drop name="圆弧选项" />
          <Tool name="样条曲线"><SplineIcon /></Tool><Tool name="直线"><LineIcon /></Tool><Tool name="圆"><CircleIcon /></Tool><Drop name="圆选项" />
          <Tool name="多边形"><PolygonIcon /></Tool><Tool name="矩形"><RectIcon /></Tool><Tool name="椭圆"><EllipseIcon /></Tool><Drop name="椭圆选项" />
        </div>
      </Panel>
      <Panel title="修改" w="w-[181px]" more>
        <div className={`${rows} grid-cols-[32px_35px_31px_35px_28px_16px]`}>
          <Tool name="三维对齐"><AlignIcon /></Tool><Tool name="三维移动"><Gizmo3DMove /></Tool><Tool name="移动"><MoveIcon /></Tool><Tool name="复制"><CopyIcon /></Tool><Tool name="修剪"><TrimIcon /></Tool><Drop name="修剪选项" />
          <Tool name="三维镜像"><EraseSolid /></Tool><Tool name="三维旋转"><GizmoRotate /></Tool><Tool name="旋转"><RotateIcon /></Tool><Tool name="拉伸"><TaperIcon /></Tool><Tool name="圆角"><FilletIcon /></Tool><Drop name="圆角选项" />
          <Tool name="删除"><BrushIcon /></Tool><Tool name="三维缩放"><GizmoScale /></Tool><Tool name="缩放"><ScaleIcon /></Tool><Tool name="偏移"><OffsetIcon /></Tool><Tool name="阵列"><ArrayIcon /></Tool><Drop name="阵列选项" />
        </div>
      </Panel>
      <Panel title="截面" w="w-[77px]" more launcher>
        <Big icon={<SectionBig />} lines={["截面", "平面"]} w="w-[75px]" />
      </Panel>
      <Panel title="坐标" w="w-[181px]" launcher>
        <div className={`${rows} grid-cols-[34px_8px]`}>
          <Tool name="原点"><UcsNew /></Tool><Drop name="原点选项" />
          <Tool name="绕 X 轴旋转"><UcsX /></Tool><Drop name="旋转选项" />
          <Tool name="视图 UCS"><UcsView /></Tool><Drop name="视图选项" />
        </div>
        <div className={`${rows} grid-cols-[32px_31px_30px_30px] pl-[9px]`}>
          <Tool name="UCS"><UcsPanel /></Tool><Tool name="Z 轴矢量"><UcsZAxis /></Tool><Tool name="命名 UCS"><UcsNamed /></Tool><Tool name="世界 UCS"><UcsWorld /></Tool>
          <Tool name="上一个"><UcsPrev /></Tool><Tool name="UCS 原点"><UcsOrigin /></Tool><Tool name="Z"><UcsZ /></Tool><Tool name="三点"><Ucs3 /></Tool>
          <Combo label="命名 UCS 列表" value="世界" icon={<UcsWorld />} className="col-span-4 mt-[2px]" />
        </div>
      </Panel>
      <Panel title="视图" w="w-[257px]" more>
        <div className={`${rows} flex-1 px-[2px]`}>
          <Combo label="视觉样式" value="X 射线" icon={<XrayIcon />} className="mt-[3px]" />
          <Combo label="命名视图" value="未保存的视图" icon={<ViewIcon />} className="mt-[3px]" />
          <Labeled icon={<ViewportIcon />} text="单个视口" arrow />
        </div>
      </Panel>
      <Panel title="选择" w="w-[214px]">
        <div className="flex pl-px">
          <Big icon={<CullBig />} lines={["剔除"]} w="w-[47px]" active />
          <Big icon={<FilterBig />} lines={["无过滤器"]} w="w-[90px]" arrow />
          <div className="flex items-center pl-[5px]">
            <Big icon={<GizmoRotate s={40} />} lines={["旋转", "小控件"]} w="w-[60px]" />
            <span className="-ml-[3px] mt-12 flex"><Drop name="小控件选项" /></span>
          </div>
        </div>
      </Panel>
      <Panel title="图层" w="w-[314px]" more>
        <Big icon={<LayerPropsBig />} lines={["图层", "特性"]} w="w-[50px]" />
        <div className={`${rows} flex-1 grid-cols-[28px_30px_31px_30px_1fr]`}>
          <Combo
            label="图层列表"
            value="0"
            className="col-span-5 mr-px mt-[2px]"
            icon={
              <span className="flex items-center gap-[4px]">
                <BulbIcon /><SunIcon /><OpenLock />
                <span className="ml-1 h-[18px] w-[18px] border border-black bg-white" />
              </span>
            }
          />
          <Tool name="关闭图层"><LayerOff /></Tool><Tool name="隔离"><LayerIso /></Tool><Tool name="冻结"><LayerFreeze /></Tool><Tool name="锁定"><LayerLock /></Tool><Labeled icon={<LayerCurrent />} text="置为当前" />
          <Tool name="打开所有图层"><LayerOn /></Tool><Tool name="取消隔离"><LayerUniso /></Tool><Tool name="解冻"><LayerThaw /></Tool><Tool name="解锁"><LayerUnlock /></Tool><Labeled icon={<LayerMatch />} text="匹配图层" />
        </div>
      </Panel>
      <Panel title="组" w="w-[85px]" more>
        <Big icon={<GroupBig />} lines={["组"]} w="w-[50px]" />
        <div className={`${rows} grid-cols-[30px]`}>
          <Tool name="组编辑"><GroupEdit /></Tool>
          <Tool name="添加到组"><GroupAdd /></Tool>
          <Tool name="启用组选择" active><GroupSelect /></Tool>
        </div>
      </Panel>
      <Panel title="视图" w="w-[77px]" more launcher>
        <Big icon={<BaseBig />} lines={["基点"]} w="w-[75px]" arrow />
      </Panel>
    </div>
  );
}

function FileTabs() {
  return (
    <nav className="flex h-[35px] items-end border-b-4 border-[#5b5b5b] bg-[#383838] pl-[17px]">
      <button className="h-[27px] w-[170px] bg-gradient-to-b from-[#505050] to-[#5a5a5a] pl-[22px] text-left text-[#b4b4b4] [clip-path:path('M0_27Q8_25_11_13Q14_0_24_0H150Q160_0_165_20L167_27Z')]">
        开始
      </button>
      <div className="-ml-3 flex h-[27px] w-[170px] items-center bg-gradient-to-b from-[#676767] to-[#7b7b7b] pl-[18px] text-white [clip-path:path('M0_27Q6_20_9_10Q12_0_20_0H146Q155_0_158_13Q162_26_170_27Z')]">
        <button>Drawing1*</button>
        <button aria-label="关闭 Drawing1" className="ml-auto mr-[27px]">
          <Ic s={10}><path d="M1 1L9 9M9 1L1 9" stroke="#454545" strokeWidth="2.500" /></Ic>
        </button>
      </div>
      <button aria-label="新图形" className="mb-1 ml-[-2px] flex h-[19px] w-[27px] items-center justify-center rounded-bl-lg rounded-tr-xl bg-[#555]">
        <Ic s={10}><path d="M5 0V10M0 5H10" stroke="#b9b9b9" strokeWidth="2.500" /></Ic>
      </button>
    </nav>
  );
}

/* ---------- drawing area ---------- */

const profile: [number, number][] = [
  [1.43, 1], [2.24, 0.966], [2.86, 0.942], [3.79, 0.896], [4.55, 0.866], [5.0, 0.858],
];

function gearPath(cx: number, cy: number, ux: number, uy: number, vx: number, vy: number) {
  const pts: string[] = [];
  const put = (deg: number, r: number) => {
    const a = (deg * Math.PI) / 180;
    const s = Math.sin(a) * r;
    const c = Math.cos(a) * r;
    pts.push(`${(cx + s * ux + c * vx).toFixed(1)} ${(cy + s * uy + c * vy).toFixed(1)}`);
  };
  for (let t = 0; t < 30; t++) {
    const base = t * 12;
    for (let i = profile.length - 1; i >= 0; i--) put(base - profile[i][0], profile[i][1]);
    for (const [d, r] of profile) put(base + d, r);
  }
  return `M${pts.join("L")}Z`;
}

const upperGear = gearPath(1334.5, 608, 485, 2, 3.5, -330.5);
const lowerGear = gearPath(1334, 775, 485, -9, -14, -330.5);

function Grid() {
  const v = Array.from({ length: 36 }, (_, k) => k - 2);
  const h = Array.from({ length: 26 }, (_, k) => k);
  const line = (major: boolean) => (major ? "#343b4c" : "#272e3a");
  return (
    <g strokeWidth="1">
      {v.map((k) => {
        const x = 173 + (k * 379.7) / 5;
        return <line key={`v${k}`} x1={x} y1="213" x2={x + 46.5} y2="1331" stroke={line(k % 5 === 0)} />;
      })}
      {h.map((k) => {
        const y = 26 + (k * 258.6) / 5 + 206.9;
        return <line key={`h${k}`} x1="0" y1={y} x2="2550" y2={y - 48.5} stroke={line((k + 4) % 5 === 0)} />;
      })}
    </g>
  );
}

function Drawing() {
  return (
    <svg viewBox="0 213 2549 1118" preserveAspectRatio="xMidYMid slice" className="absolute inset-0 h-full w-full" fill="none" aria-label="图形">
      <g shapeRendering="crispEdges">
        <Grid />
        <path d="M1311 213L1334 776" stroke="#1f7a26" />
        <path d="M1334 776L2549 753" stroke="#7a2226" />
        <path d={upperGear} stroke="#fff" />
        <path d={lowerGear} stroke="#fff" />
      </g>
      <rect x="1331" y="740" width="6" height="36" fill="#3d66a8" />
      <rect x="1331" y="740" width="2" height="36" fill="#6f96d0" />
      <rect x="1337" y="772" width="46" height="6" fill="#a84444" />
      <rect x="1337" y="773" width="46" height="2" fill="#e07c7c" />
      <g fontFamily="Liberation Sans" fontSize="17">
        <text x="1379" y="771" fill="#e02a2a">X</text>
        <text x="1331" y="737" fill="#1fb42a">Y</text>
        <text x="1332" y="737" fill="#1668f0">Z</text>
      </g>
      <g shapeRendering="crispEdges">
        <path d="M1654.500 873V978" stroke="#7d70ee" />
        <path d="M1655.500 873V975" stroke="#5fdc6a" />
        <path d="M1608 942.500H1750" stroke="#ff7878" />
        <rect x="1651.500" y="939.500" width="6" height="6" fill="#212830" stroke="#fff" />
      </g>
    </svg>
  );
}

function ViewCube() {
  return (
    <div className="absolute right-[2px] top-[56px] flex w-[156px] flex-col items-center">
      <svg width="156" height="136" viewBox="0 -14 156 136" fill="none">
        <ellipse cx="75" cy="62" rx="56" ry="39" stroke="#454b54" strokeWidth="13" />
        <path d="M51 3L98 2L102 34L50 35Z" fill="#b4b5b7" />
        <path d="M50 35L102 34L99 69L52 70Z" fill="#9c9d9f" />
        <rect x="59" y="28" width="33" height="14" fill="#9ea3ac" />
        <path d="M50 35H102" stroke="#4a4e55" strokeDasharray="9 4" />
        <path d="M51 3L98 2L102 34L99 69L52 70L50 35Z" stroke="#6c6f74" strokeDasharray="8 3" />
        <g fontFamily="'Noto Sans CJK SC', sans-serif" textAnchor="middle">
          <text x="76" y="24" fontSize="24" fill="#555a61">上</text>
          <text x="76" y="60" fontSize="24" fill="#555a61">前</text>
          <text x="17" y="65" fontSize="18" fill="#a3a7ab">西</text>
          <text x="133" y="62" fontSize="18" fill="#a3a7ab">东</text>
          <text x="77" y="112" fontSize="20" fill="#c3c6c8">南</text>
        </g>
      </svg>
      <button className="mr-[5px] mt-px flex h-[17px] w-12 items-center justify-between rounded border border-[#b3b5c0] bg-[#9a9ca8] px-1 text-[11px] leading-none text-[#5b5e6b]">
        WCS
        <svg width="9" height="6" viewBox="0 0 9 6"><path d="M.5 .5H8.500L4.500 5Z" fill="#b9bbc5" stroke="#777a86" strokeWidth=".7" /></svg>
      </button>
    </div>
  );
}

function NavBar() {
  const stroke = "#41464d";
  const tri = <svg width="6" height="4" viewBox="0 0 6 4"><path d="M0 0H6L3 4Z" fill={stroke} /></svg>;
  return (
    <div className="absolute right-[4px] top-[235px] flex h-[214px] w-[33px] flex-col items-center rounded-sm border border-[#9a9da1] bg-[#7d8085] shadow-[0_0_0_1px_#14181d]">
      <button aria-label="关闭导航栏" className="mr-px mt-px self-end"><Ic s={9}><circle cx="4.500" cy="4.500" r="4" fill={stroke} /><path d="M3 3L6 6M6 3L3 6" stroke="#aaa" /></Ic></button>
      <button aria-label="导航控制盘" className="mt-[7px] flex flex-col items-center gap-[7px]">
        <Ic s={24}><path d="M12 1H23V12A11 11 0 1 1 12 1Z" stroke={stroke} /><circle cx="12" cy="12" r="6" stroke={stroke} /><path d="M4 19L8 16M20 19L16 16M12 18V22" stroke={stroke} /></Ic>
        {tri}
      </button>
      <span className="my-[4px] h-px w-6 bg-[#686b70]" />
      <button aria-label="平移">
        <Ic s={25}><path d="M8 23L6 18L2 13Q2 11 4 12L8 15L5 6Q6 4 7 5L10 12L10 3Q11 1 13 3V12L16 4Q18 3 18 5L16 13L20 8Q22 8 21 10L18 18L16 23Z" stroke={stroke} strokeWidth="1.300" /></Ic>
      </button>
      <button aria-label="范围缩放" className="mt-[2px] flex flex-col items-center gap-[6px]">
        <Ic s={25}><path d="M1 1L16 16M16 1L1 16M1 5V1H5M12 1H16V5M1 12V16H5" stroke={stroke} strokeWidth="1.500" /><circle cx="16" cy="16" r="5" fill="#7d8085" stroke={stroke} strokeWidth="1.300" /><path d="M20 20L24 23" stroke={stroke} strokeWidth="2.500" /></Ic>
        {tri}
      </button>
      <button aria-label="动态观察" className="mt-1 flex flex-col items-center gap-[6px]">
        <Ic s={24}><path d="M10 23V7H7L12 1L17 7H14V23Z" stroke={stroke} /><path d="M9 9Q1 10 1 13T11 17M15 9Q23 10 23 13T15 17" stroke={stroke} strokeWidth="1.300" /><path d="M9 13L4 17L9 20Z" fill={stroke} /></Ic>
        {tri}
      </button>
      <span className="my-[4px] h-px w-6 bg-[#686b70]" />
      <button aria-label="ShowMotion">
        <Ic s={24}><path d="M1 1H7V7H1ZM9 1H15V7H9ZM17 1H23V7H17ZM1 10H17V23H1Z" stroke={stroke} strokeWidth="1.300" /><path d="M6 12L13 16.500L6 21Z" fill={stroke} /></Ic>
      </button>
      <button aria-label="导航栏选项" className="mb-px mr-px mt-auto self-end"><Ic s={9}><circle cx="4.500" cy="4.500" r="4" fill={stroke} /><path d="M2.500 4H6.500M3.500 6H5.500" stroke="#aaa" /></Ic></button>
    </div>
  );
}

function Watermark() {
  return (
    <svg width="478" height="225" viewBox="0 0 478 225" className="pointer-events-none absolute bottom-[-2px] right-[120px]" role="img" aria-label="Baidu 经验">
      <g fill="#c0c1c3">
        <ellipse cx="180" cy="64" rx="17" ry="22" />
        <ellipse cx="212" cy="32" rx="16" ry="23" />
        <ellipse cx="253" cy="34" rx="17" ry="22" transform="rotate(7 253 34)" />
        <ellipse cx="278" cy="74" rx="17" ry="22" />
        <path d="M228 68Q240 68 250 84Q258 97 274 110Q285 122 285 133Q284 152 265 153Q250 153 240 149Q228 147 216 150Q206 154 192 152Q172 150 172 130Q172 117 188 104Q200 94 207 83Q217 68 228 68Z" />
        <text x="2" y="151" fontFamily="'Liberation Sans'" fontWeight="700" fontSize="104">Bai</text>
        <text x="301" y="145" fontFamily="'Noto Sans CJK SC'" fontWeight="900" fontSize="76">经验</text>
      </g>
      <text x="228" y="141" textAnchor="middle" fill="#262c34" fontFamily="'Liberation Sans'" fontWeight="700" fontSize="66">du</text>
      <text x="7" y="211" fill="#dcddde" fontFamily="'Open Sans'" fontSize="53">jingyan.baidu.com</text>
    </svg>
  );
}

function CommandLine() {
  return (
    <div className="absolute bottom-px left-[513px] right-[502px]">
      <div className="flex flex-col items-start gap-[6px] pb-[2px] pl-[74px] text-xl leading-[23px]">
        <span className="rounded-sm bg-[#54575a] px-[3px] text-[#c9cacb]">命令:</span>
        <span className="whitespace-nowrap rounded-sm bg-[#5a5c5e] px-[3px] text-[#ececec]">
          按 <span className="mx-[5px] font-['Liberation_Mono'] text-[17px]">ESC</span> 或 <span className="mx-[5px] font-['Liberation_Mono'] text-[17px]">ENTER</span> 键退出，或者单击鼠标右键显示快捷菜单。
        </span>
      </div>
      <div className="flex h-[34px] border-y-2 border-[#6a6c6e] bg-[#bdbebf]">
        <div className="flex w-[67px] items-center bg-gradient-to-b from-[#565656] to-[#404040] pl-1">
          <svg width="8" height="22" viewBox="0 0 8 22" fill="none"><path d="M2 0V22M6 0V22" stroke="#999" strokeWidth="1.500" strokeDasharray="2 2" /></svg>
          <button aria-label="关闭命令行" className="ml-[6px]"><Ic s={12}><path d="M1 1L11 11M11 1L1 11" stroke="#d3d3d3" strokeWidth="2" /></Ic></button>
          <button aria-label="自定义" className="ml-[11px]"><Ic><path d="M3 1L7 5L5 8L2 6Q1 10 5 11L14 19Q18 20 18 16L10 8Q11 3 7 1" fill="#c9ced4" stroke="#45484c" /></Ic></button>
        </div>
        <button aria-label="最近使用的命令" className="ml-[6px] flex items-center gap-1">
          <span className="flex h-[19px] w-[19px] items-center justify-center rounded-sm border border-[#7e848e] bg-[#9aa2ae]">
            <Ic s={14}><path d="M3 3L7 7L3 11M8 11H13" stroke="#2d3340" strokeWidth="1.500" /></Ic>
          </span>
          <svg width="8" height="5" viewBox="0 0 8 5"><path d="M0 0H8L4 5Z" fill="#55585e" /></svg>
        </button>
        <input aria-label="命令" placeholder="键入命令" className="ml-[10px] min-w-0 flex-1 bg-transparent text-xl italic text-[#333] outline-none placeholder:text-[#7d7e80]" />
        <button aria-label="命令历史" className="pr-[6px]"><svg width="8" height="5" viewBox="0 0 8 5"><path d="M0 5H8L4 0Z" fill="#222" /></svg></button>
      </div>
    </div>
  );
}

function Viewport() {
  return (
    <main className="flex min-h-0 flex-1">
      <div className="relative min-w-0 flex-1 overflow-hidden bg-[#212830]">
        <Drawing />
        <div className="relative flex items-start justify-between">
          <div className="flex pl-[3px] pt-[5px] text-xs leading-4 text-white">
            <button>[−]</button><button>[自定义视图]</button><button>[X 射线]</button>
          </div>
          <div className="flex gap-[10px] pr-[11px] pt-[9px]">
            <button aria-label="最小化视口"><Ic s={10}><rect y="6" width="10" height="3" fill="#fff" /></Ic></button>
            <button aria-label="还原视口"><Ic s={10}><path d="M1 4H7V9H1Z" stroke="#fff" strokeWidth="2" /><path d="M3 .500H9.500V7" stroke="#fff" /></Ic></button>
            <button aria-label="关闭视口"><Ic s={10}><path d="M1 1L9 9M9 1L1 9" stroke="#fff" strokeWidth="2.500" /></Ic></button>
          </div>
        </div>
        <ViewCube />
        <NavBar />
        <p lang="zh-CN" className="absolute left-[245px] top-[366px] font-['Noto_Sans_CJK_SC',sans-serif] text-[33px] leading-[44px] text-white [text-shadow:0_0_2px_#111]">
          选择“放样”功能<br />依次选择下层和上层的齿轮
        </p>
        <CommandLine />
      </div>
      <div className="w-[7px] bg-gradient-to-b from-[#b4cee8] via-[#b9d2ea] to-[#b4cee8]" />
      <div className="w-px bg-[#19c5f2]" />
      <div className="w-[3px] bg-[#121212]" />
    </main>
  );
}

/* ---------- bottom bars ---------- */

function LayoutTabs() {
  return (
    <nav className="flex h-[24px] items-start border-t border-[#5e5e5e] pl-[13px]">
      <button className="h-[22px] w-[61px] bg-gradient-to-b from-[#555] to-[#8c8c8c] font-bold leading-[20px] text-white [clip-path:path('M0_0H61Q56_2_55_12Q54_22_48_22H12Q6_22_5_12Q4_2_0_0Z')]">模型</button>
      {["布局1", "布局2"].map((t) => (
        <button key={t} className="h-[22px] w-[68px] rounded-b-xl border-x border-[#333] bg-[#565656] leading-[20px] text-[#c4c4c4]">{t}</button>
      ))}
      <button aria-label="新建布局" className="ml-1 flex h-[20px] w-[29px] items-center justify-center rounded-br-xl rounded-tl-xl bg-[#555]">
        <Ic s={10}><path d="M5 0V10M0 5H10" stroke="#b9b9b9" strokeWidth="2" /></Ic>
      </button>
    </nav>
  );
}

const on = "#2a94ff";
const off = "#bdbdbd";
const cell = "flex h-8 items-center border border-[#7a7a7a] bg-[#4c4c4c]";

function SBtn({ name, children, w = "w-[29px]" }: Kids & { name: string; w?: string }) {
  return <button aria-label={name} className={`flex items-center justify-center ${w}`}>{children}</button>;
}
function STri({ name, w = "w-5" }: { name: string; w?: string }) {
  return (
    <SBtn name={name} w={w}>
      <svg width="8" height="5" viewBox="0 0 8 5"><path d="M0 0H8L4 5Z" fill="#fff" /></svg>
    </SBtn>
  );
}
const Person = ({ c }: { c: string }) => <path d="M10 2Q13 6 12 10L18 17L16 18L10 14L4 18L2 17L8 10Q7 6 10 2Z" fill={c} />;

function StatusBar() {
  const ticks = [3, 7, 11, 15];
  return (
    <footer className="flex h-[35px] items-start justify-end gap-px pt-px text-white">
      <button className={`${cell} px-[2px]`}>模型</button>
      <div className={`${cell} w-[82px]`}>
        <SBtn name="栅格" w="w-8"><Ic>{ticks.map((t) => <path key={t} d={`M${t + 1} 1V19M1 ${t + 1}H19`} stroke={on} strokeWidth="1.500" />)}</Ic></SBtn>
        <SBtn name="捕捉" w="w-7"><Ic>{[2, 6, 10, 14, 18].map((t) => <path key={t} d={`M1 ${t}H19`} stroke={on} strokeWidth="1.500" strokeDasharray="2 2" />)}</Ic></SBtn>
        <STri name="捕捉选项" />
      </div>
      <div className="flex">
        <div className={`${cell} w-[130px]`}>
          <SBtn name="正交" w="w-[31px]"><Ic><path d="M3 1V18H19M3 12H9V18" stroke={off} strokeWidth="1.500" /></Ic></SBtn>
          <SBtn name="极轴"><Ic><path d="M17 13A8 8 0 1 1 15 4" stroke={on} strokeWidth="2" /><path d="M9 10H20M9 10L15 4" stroke={on} strokeWidth="2" /></Ic></SBtn>
          <STri name="极轴选项" />
          <SBtn name="等轴测"><Ic><path d="M3 1L19 19M10 1V19" stroke={off} strokeWidth="1.300" /></Ic></SBtn>
          <STri name="等轴测选项" />
        </div>
        <div className={`${cell} w-[81px] border-l-0`}>
          <SBtn name="对象追踪" w="w-[31px]"><Ic><path d="M16 2L3 17H19" stroke={on} strokeWidth="2" /><circle cx="9" cy="10" r="2" fill={on} /></Ic></SBtn>
          <SBtn name="对象捕捉"><Ic><path d="M2 2H18V18H2Z" stroke={on} strokeWidth="2" /><rect x="0" y="0" width="8" height="8" fill="#0c4a10" /><rect x="2" y="2" width="4" height="4" fill="#16d022" /></Ic></SBtn>
          <STri name="对象捕捉选项" />
        </div>
      </div>
      <div className={`${cell} w-[133px]`}>
        <SBtn name="注释可见性" w="w-[30px]"><Ic><Person c={on} /><circle cx="14" cy="5" r="3.500" stroke={on} strokeWidth="1.500" fill="#4c4c4c" /></Ic></SBtn>
        <SBtn name="自动缩放" w="w-[30px]"><Ic><Person c={off} /><path d="M16 1L13 6H18L15 11" stroke={off} strokeWidth="1.500" /></Ic></SBtn>
        <SBtn name="注释比例" w="w-[30px]"><Ic><Person c={off} /></Ic></SBtn>
        <button className="ml-[3px] text-sm">1:1</button>
        <STri name="比例选项" w="w-4" />
      </div>
      <div className="flex">
        <div className={`${cell} w-[50px]`}>
          <SBtn name="切换工作空间"><Ic><circle cx="10" cy="10" r="5" stroke={off} strokeWidth="3" /><circle cx="10" cy="10" r="7.500" stroke={off} strokeWidth="2" strokeDasharray="3 2.900" /></Ic></SBtn>
          <STri name="工作空间选项" />
        </div>
        <div className={`${cell} w-8 justify-center border-l-0`}><SBtn name="注释监视器"><Ic><path d="M10 1V19M1 10H19" stroke={off} strokeWidth="2" /></Ic></SBtn></div>
      </div>
      <div className={`${cell} w-8 justify-center`}><SBtn name="隔离对象"><Ic><path d="M1 1H8V9H1Z" stroke={off} strokeWidth="1.300" /><circle cx="15" cy="9" r="4" stroke={off} strokeWidth="1.300" /><path d="M9 12L13 19H5Z" stroke={off} strokeWidth="1.300" /></Ic></SBtn></div>
      <div className={`${cell} w-8 justify-center`}><SBtn name="硬件加速"><Ic><circle cx="10" cy="10" r="9" fill="#0a5aa8" stroke={on} strokeWidth="1.500" /><path d="M9 12L11 14L15 9" stroke={on} strokeWidth="1.500" /></Ic></SBtn></div>
      <div className={`${cell} w-[6px]`} />
      <div className={`${cell} w-[62px] border-r-0`}>
        <SBtn name="全屏显示" w="w-[31px]"><Ic><rect x="1" y="2" width="18" height="15" stroke={off} strokeWidth="1.500" /><path d="M11 9L16 5M12 5H16V9M9 10L4 14M4 10V14H8" stroke={off} strokeWidth="1.500" /></Ic></SBtn>
        <SBtn name="自定义" w="w-[31px]"><Ic><path d="M1 4H19M1 10H19M1 16H19" stroke={off} strokeWidth="2" /></Ic></SBtn>
      </div>
    </footer>
  );
}

export default function App() {
  return (
    <div className="relative flex h-screen flex-col overflow-hidden bg-[#383838] font-['Open_Sans','Noto_Sans_CJK_SC',sans-serif] text-[15px] leading-5">
      <Header />
      <Ribbon />
      <FileTabs />
      <Viewport />
      <div className="relative">
        <LayoutTabs />
        <StatusBar />
        <div className="pointer-events-none absolute right-0 top-0">
          <Watermark />
        </div>
      </div>
      <svg width="300" height="350" viewBox="120 130 300 350" className="pointer-events-none absolute left-[120px] top-[130px]" aria-hidden="true">
        <path d="M122 133L139 142L136 143L414 472L413 474L129 148L128 151Z" fill="#fb3b3b" />
      </svg>
    </div>
  );
}
